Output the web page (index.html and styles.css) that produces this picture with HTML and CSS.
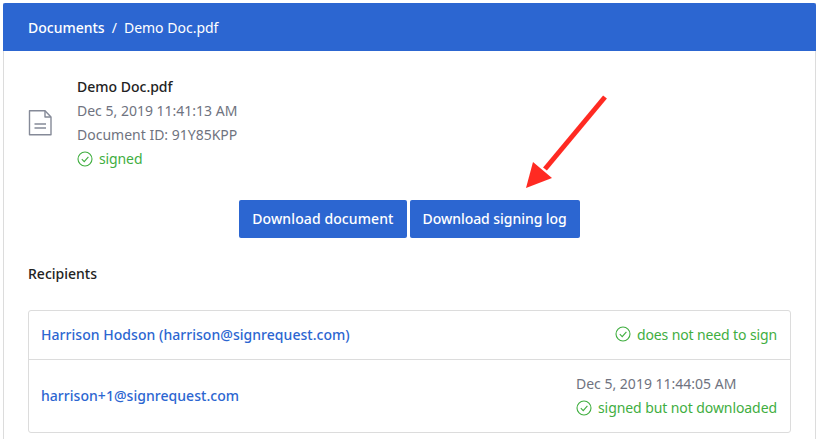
FILE: index.html
```html
<!DOCTYPE html>
<html lang="en">
<head>
<meta charset="utf-8">
<title>Demo Doc.pdf</title>
<link rel="stylesheet" href="styles.css">
</head>
<body>
<main class="card">
  <header class="crumbs">
    <span class="crumb-root">Documents</span>
    <span class="crumb-sep">/</span>
    <span class="crumb-doc">Demo Doc.pdf</span>
  </header>
  <div class="body">
    <section class="doc">
      <svg class="doc-icon" width="24" height="28" viewBox="0 0 24 28" fill="none" stroke="#858a98" stroke-width="1.4" stroke-linejoin="round">
        <path d="M1.5 1.7H17L23 8V25.8H1.5Z"/>
        <path d="M17 1.7V8H23"/>
        <path d="M6.5 15H18M6.5 19H18"/>
      </svg>
      <div class="doc-info">
        <div class="doc-name">Demo Doc.pdf</div>
        <div class="muted">Dec 5, 2019 11:41:13 AM</div>
        <div class="muted">Document ID: 91Y85KPP</div>
        <div class="status">
          <svg class="check" width="16" height="16" viewBox="0 0 16 16" fill="none" stroke="#3fae3f" stroke-width="1.1"><circle cx="8" cy="8" r="7"/><path d="M4.8 8.2L7.2 10.6L11.4 5.8"/></svg>
          <span>signed</span>
        </div>
      </div>
    </section>
    <div class="actions">
      <button class="btn btn-wide">Download document</button>
      <button class="btn btn-tight">Download signing log</button>
    </div>
    <h2 class="section-title">Recipients</h2>
    <div class="list">
      <div class="row row-short">
        <a class="recipient">Harrison Hodson (harrison@signrequest.com)</a>
        <div class="status">
          <svg class="check" width="16" height="16" viewBox="0 0 16 16" fill="none" stroke="#3fae3f" stroke-width="1.1"><circle cx="8" cy="8" r="7"/><path d="M4.8 8.2L7.2 10.6L11.4 5.8"/></svg>
          <span>does not need to sign</span>
        </div>
      </div>
      <div class="row row-tall">
        <a class="recipient">harrison+1@signrequest.com</a>
        <div class="row-meta">
          <div class="muted">Dec 5, 2019 11:44:05 AM</div>
          <div class="status">
            <svg class="check" width="16" height="16" viewBox="0 0 16 16" fill="none" stroke="#3fae3f" stroke-width="1.1"><circle cx="8" cy="8" r="7"/><path d="M4.8 8.2L7.2 10.6L11.4 5.8"/></svg>
            <span>signed but not downloaded</span>
          </div>
        </div>
      </div>
    </div>
  </div>
</main>
<svg class="arrow" width="819" height="439" viewBox="0 0 819 439"><path d="M605 97L545 169" stroke="#ff2a22" stroke-width="5" fill="none"/><path d="M526 188L533 162L552 178Z" fill="#ff2a22"/></svg>
</body>
</html>
```
FILE: styles.css
```css
html, body { margin: 0; padding: 0; }
body {
  width: 819px;
  height: 439px;
  overflow: hidden;
  background: #fff;
  font-family: "Noto Sans", "Open Sans", sans-serif;
  font-size: 14px;
  color: #6f7380;
  position: relative;
}
.card {
  margin: 3px 3px 0;
  height: 436px;
  box-sizing: border-box;
  border-left: 1px solid #dcdcdc;
  border-right: 1px solid #dcdcdc;
}
.crumbs {
  margin: 0 -1px;
  height: 48px;
  padding: 0 25px;
  background: #2c66d1;
  border-radius: 2px 2px 0 0;
  color: #fff;
  display: flex;
  align-items: center;
  gap: 7px;
}
.crumb-root { font-weight: 500; }
.body { padding: 24px 24px 0; }
.doc { display: flex; align-items: center; gap: 25px; }
.doc-info { display: flex; flex-direction: column; line-height: 24px; }
.doc-name { color: #222; font-weight: 500; }
.status { display: flex; align-items: center; gap: 6px; color: #3fae3f; letter-spacing: -0.12px; }
.actions { display: flex; justify-content: center; gap: 3px; margin-top: 29px; }
.btn {
  height: 38px;
  padding: 0 13px 2px;
  border: 0;
  border-radius: 2px;
  background: #2c66d1;
  color: #fff;
  font: 500 14px "Noto Sans", "Open Sans", sans-serif;
}
.btn-wide { letter-spacing: 0.1px; }
.btn-tight { letter-spacing: -0.05px; }
.section-title {
  margin: 26px 0 26px;
  font-size: 14px;
  line-height: 20px;
  font-weight: 500;
  color: #222;
}
.list { border: 1px solid #dcdcdc; border-radius: 3px; }
.row {
  display: flex;
  justify-content: space-between;
  align-items: center;
  padding: 0 13px 0 12px;
}
.row-short { height: 46px; padding-bottom: 2px; border-bottom: 1px solid #dcdcdc; }
.row-tall { height: 72px; }
.row-tall .recipient { margin-bottom: 2px; }
.recipient { color: #2c66d1; font-weight: 500; letter-spacing: 0.04px; }
.row-meta { display: flex; flex-direction: column; line-height: 24px; }
.row-meta .status { letter-spacing: -0.08px; }
.arrow { position: absolute; left: 0; top: 0; pointer-events: none; }
```
